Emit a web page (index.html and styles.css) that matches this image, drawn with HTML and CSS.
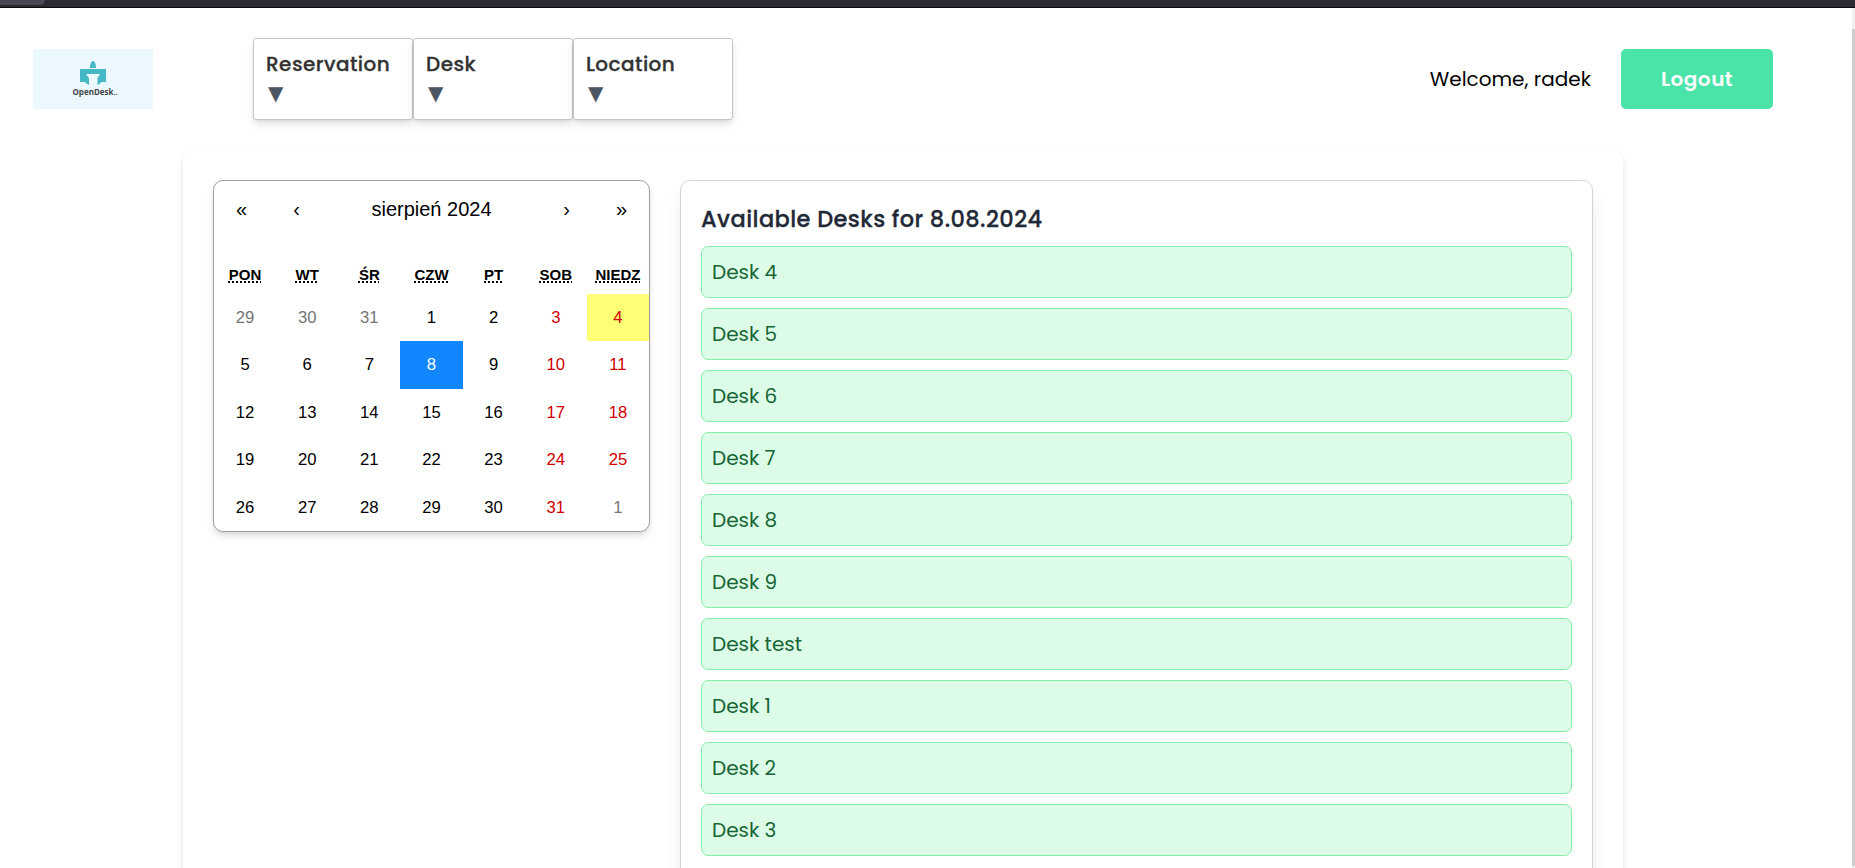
FILE: index.html
```html
<!DOCTYPE html>
<html lang="pl">
<head>
<meta charset="utf-8">
<title>OpenDesk</title>
<link rel="stylesheet" href="styles.css">
</head>
<body>
<div class="browser-edge"><div class="browser-tab"></div></div>
<div class="viewport">
<div class="page">
<header class="header">
  <div class="logo">
    <svg class="logo-mark" viewBox="0 0 26 24" width="26" height="24"><path fill="#45b8c6" d="M10 7C10 3 11.200 0 13 0s3 3 3 7zM0 8h26v13h-4.500L20 22.500 17.500 24V17l2.500-4H6l3 4v7l-2.500-1.500L5 21H0z"/></svg>
    <span class="logo-text">OpenDesk<span class="logo-dots">..</span></span>
  </div>
  <nav class="menu">
    <div class="menu-item"><span class="menu-label">Reservation</span><span class="arrow">▼</span></div>
    <div class="menu-item"><span class="menu-label">Desk</span><span class="arrow">▼</span></div>
    <div class="menu-item"><span class="menu-label">Location</span><span class="arrow">▼</span></div>
  </nav>
  <div class="account"><span class="welcome">Welcome, radek</span><button class="logout">Logout</button></div>
</header>
<main class="board">
  <section class="calendar">
    <div class="cal-nav"><span>«</span><span>‹</span><span class="cal-title">sierpień 2024</span><span>›</span><span>»</span></div>
    <div class="weekdays"><abbr>PON</abbr><abbr>WT</abbr><abbr>ŚR</abbr><abbr>CZW</abbr><abbr>PT</abbr><abbr>SOB</abbr><abbr>NIEDZ</abbr></div>
    <div class="days">
      <span class="other">29</span><span class="other">30</span><span class="other">31</span><span>1</span><span>2</span><span class="weekend">3</span><span class="weekend today">4</span>
      <span>5</span><span>6</span><span>7</span><span class="selected">8</span><span>9</span><span class="weekend">10</span><span class="weekend">11</span>
      <span>12</span><span>13</span><span>14</span><span>15</span><span>16</span><span class="weekend">17</span><span class="weekend">18</span>
      <span>19</span><span>20</span><span>21</span><span>22</span><span>23</span><span class="weekend">24</span><span class="weekend">25</span>
      <span>26</span><span>27</span><span>28</span><span>29</span><span>30</span><span class="weekend">31</span><span class="other">1</span>
    </div>
  </section>
  <section class="desks">
    <h2 class="desks-title">Available Desks for 8.08.2024</h2>
    <ul class="desk-list">
      <li>Desk 4</li><li>Desk 5</li><li>Desk 6</li><li>Desk 7</li><li>Desk 8</li><li>Desk 9</li><li>Desk test</li><li>Desk 1</li><li>Desk 2</li><li>Desk 3</li>
    </ul>
  </section>
</main>
</div>
<div class="scrollbar"><div class="thumb"></div></div>
</div>
</body>
</html>
```
FILE: styles.css
```css
* { box-sizing: border-box; }
body {
  margin: 0;
  height: 868px;
  overflow: hidden;
  display: flex;
  flex-direction: column;
  background: #fff;
  font: 20px/30px Poppins, Inter, sans-serif;
  color: #000;
}
.browser-edge { flex: none; height: 8px; background: #2b2a33; border-bottom: 1px solid #0c0c0d; }
.browser-tab { width: 45px; height: 5px; background: #4a4953; border-radius: 0 0 5px 0; }
.viewport { flex: 1; min-height: 0; display: flex; }
.page { flex: 1; min-width: 0; overflow: hidden; }
.scrollbar { width: 3px; padding: 21px 0 2px; background: #f0f0f0; }
.thumb { height: 100%; background: #cdcdcd; }

.header { display: flex; align-items: center; height: 142px; padding: 0 79px 0 33px; }
.logo {
  width: 120px; height: 60px; padding-top: 12px; background: #ecf8ff;
  display: flex; flex-direction: column; align-items: center;
}
.logo-mark { display: block; flex: none; }
.logo-text { font: bold 8px/14px "Open Sans", sans-serif; color: #444; padding-left: 4px; white-space: nowrap; }
.logo-dots { font-size: 7px; }
.menu { display: flex; margin-left: 100px; }
.menu-item {
  width: 160px; height: 82px; padding: 10px 12px; background: #fff;
  display: flex; flex-direction: column;
  border: 1px solid #c6c6c6; border-radius: 3px;
  box-shadow: 0 5px 8px -1px rgba(0,0,0,.12), 0 2px 4px -2px rgba(0,0,0,.1);
}
.menu-label { font-weight: 500; color: #333; letter-spacing: .45px; -webkit-text-stroke: .3px #333; }
.arrow { font: 20px/28px "DejaVu Sans", sans-serif; color: #4b5563; padding-left: 2px; }
.account { display: flex; align-items: center; margin-left: auto; gap: 30px; }
.logout {
  width: 152px; height: 60px; border: 0; border-radius: 5px; padding: 0;
  background: #4ae3a8; color: #fff; font: 600 20px/30px Poppins, Inter, sans-serif; letter-spacing: .5px;
}

.board {
  width: 1440px; height: 900px; margin-left: 183px; padding: 30px;
  display: flex; align-items: flex-start; gap: 30px;
  background: #fff; border-radius: 10px;
  box-shadow: 0 5px 8px -1px rgba(0,0,0,.1), 0 1px 5px -1px rgba(0,0,0,.06);
}
.calendar {
  width: 437px; height: 352px; border: 1px solid #a0a096; border-radius: 10px;
  overflow: hidden; background: #fff; font-family: "Liberation Sans", Arial, sans-serif;
  box-shadow: 0 5px 8px -1px rgba(0,0,0,.12), 0 2px 4px -2px rgba(0,0,0,.1);
}
.cal-nav { display: flex; height: 55px; margin-bottom: 20px; line-height: 57px; text-align: center; }
.cal-nav span { width: 55px; }
.cal-nav .cal-title { flex: 1; }
.weekdays, .days { display: grid; grid-template-columns: repeat(7, 1fr); justify-items: center; }
.weekdays { height: 38px; font-size: 15px; font-weight: bold; line-height: 37px; }
.weekdays abbr { text-decoration: underline dotted 2px; text-underline-offset: 1px; text-decoration-skip-ink: none; }
.days { grid-template-rows: repeat(5, 47.4px); font-size: 16.67px; line-height: 47px; }
.days span { width: 100%; text-align: center; }
.days .weekend { color: #d10000; }
.days .other { color: #757575; }
.days .today { background: #ffff76; }
.days .selected { background: #1087ff; color: #fff; }

.desks {
  flex: 1; height: 860px; padding: 20px; background: #fff;
  border: 1px solid #d1d5db; border-radius: 10px;
  box-shadow: 0 12px 19px -4px rgba(0,0,0,.1), 0 5px 8px -5px rgba(0,0,0,.1);
}
.desks-title { margin: 0 0 9px; padding-top: 1px; font-size: 22.5px; line-height: 35px; font-weight: 500; color: #1f2937; letter-spacing: .42px; -webkit-text-stroke: .3px #1f2937; }
.desk-list { list-style: none; margin: 0; padding: 0; display: flex; flex-direction: column; gap: 10px; }
.desk-list li {
  height: 52px; padding: 10px; border: 1px solid #86efac; border-radius: 7px;
  background: #dcfce7; color: #166534;
}
```
